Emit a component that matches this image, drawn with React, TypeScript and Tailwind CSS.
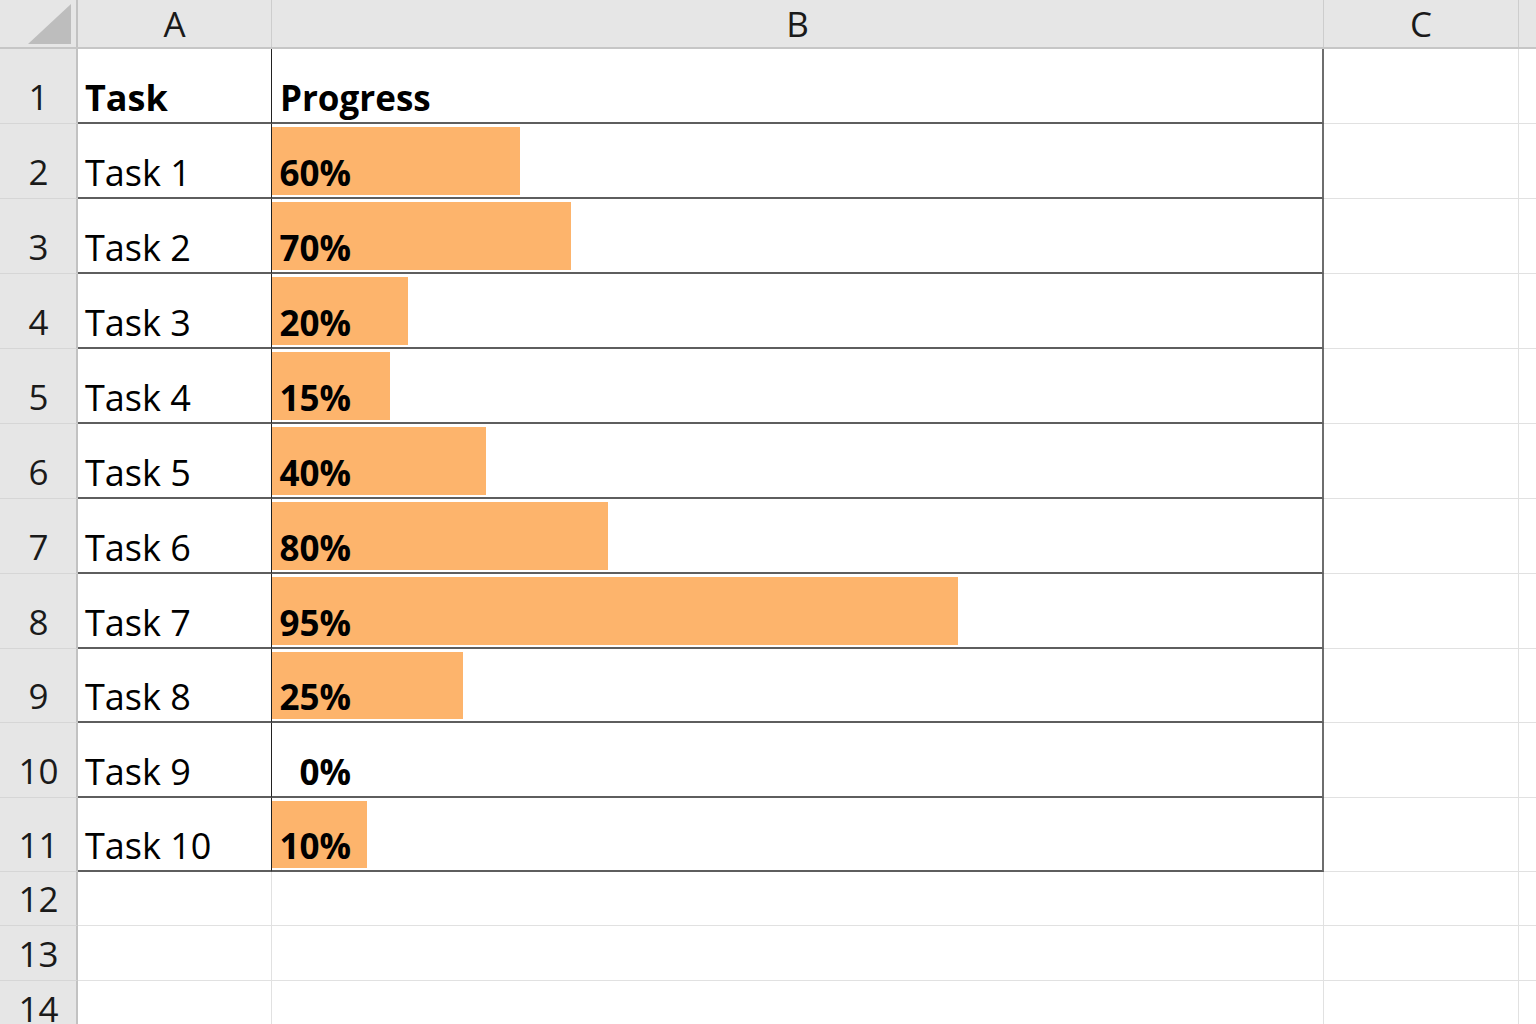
const rows = [
  { task: "Task 1", pct: "60%", bar: 248, h: 75 },
  { task: "Task 2", pct: "70%", bar: 299, h: 75 },
  { task: "Task 3", pct: "20%", bar: 136, h: 75 },
  { task: "Task 4", pct: "15%", bar: 118, h: 75 },
  { task: "Task 5", pct: "40%", bar: 214, h: 75 },
  { task: "Task 6", pct: "80%", bar: 336, h: 75 },
  { task: "Task 7", pct: "95%", bar: 686, h: 75 },
  { task: "Task 8", pct: "25%", bar: 191, h: 74 },
  { task: "Task 9", pct: "0%", bar: 0, h: 75 },
  { task: "Task 10", pct: "10%", bar: 95, h: 74 },
];

const font = { fontFamily: '"Open Sans", "Noto Sans", sans-serif' };

const RowHead = ({ n }: { n: number }) => (
  <div className="w-[78px] shrink-0 bg-[#e6e6e6] border-r-2 border-r-[#c2c2c2] border-b border-b-[#d6d6d6] flex items-end justify-center pl-[1px] pb-[6px] text-[35px] leading-[40px] text-[#1a1a1a]">
    {n}
  </div>
);

const GridTail = () => (
  <>
    <div className="w-[195px] shrink-0 border-r border-r-[#e1e1e1] border-b border-b-[#e1e1e1]" />
    <div className="flex-1 border-b border-b-[#e1e1e1]" />
  </>
);

export default function App() {
  return (
    <div className="w-[1536px] h-[1024px] overflow-hidden bg-white text-black" style={font}>
      {/* column headers */}
      <div className="flex h-[49px] bg-[#e6e6e6] border-b-2 border-b-[#c6c6c6] text-[35px] leading-[44px] text-[#1a1a1a]">
        <div className="w-[78px] shrink-0 border-r-2 border-r-[#c2c2c2] flex items-end justify-end pr-[4px] pb-[3px]">
          <svg width="44" height="40" viewBox="0 0 44 40">
            <polygon points="43,0 43,40 0,40" fill="#bdbdbd" />
          </svg>
        </div>
        <div className="w-[194px] shrink-0 border-r border-r-[#cdcdcd] flex items-end justify-center pb-[1px]">A</div>
        <div className="w-[1052px] shrink-0 border-r border-r-[#cdcdcd] flex items-end justify-center pb-[1px]">B</div>
        <div className="w-[195px] shrink-0 border-r border-r-[#cdcdcd] flex items-end justify-center pb-[1px]">C</div>
        <div className="flex-1" />
      </div>

      {/* header row */}
      <div className="flex h-[75px]">
        <RowHead n={1} />
        <div className="w-[194px] shrink-0 border-r-[1.5px] border-r-[#222] border-b-2 border-b-[#5e5e5e] flex items-end pl-[7px] pb-[4px] text-[36px] leading-[40px] font-bold">
          Task
        </div>
        <div className="w-[1052px] shrink-0 border-r-2 border-r-[#6e6e6e] border-b-2 border-b-[#5e5e5e] flex items-end pl-[8px] pb-[4px] text-[35px] leading-[40px] font-bold">
          Progress
        </div>
        <GridTail />
      </div>

      {rows.map((r, i) => (
        <div key={r.task} className="flex" style={{ height: r.h }}>
          <RowHead n={i + 2} />
          <div className="w-[194px] shrink-0 border-r-[1.5px] border-r-[#222] border-b-2 border-b-[#5e5e5e] flex items-end pl-[7px] pb-[4px] text-[36px] leading-[40px]">
            {r.task}
          </div>
          <div className="relative w-[1052px] shrink-0 border-r-2 border-r-[#6e6e6e] border-b-2 border-b-[#5e5e5e] flex items-end pl-[5px] pb-[4px]">
            {r.bar > 0 && (
              <div className="absolute left-0 top-[3px] bottom-[2px] bg-[#fdb46c]" style={{ width: r.bar }} />
            )}
            <span className="relative w-[74px] text-right text-[35px] leading-[40px] font-bold">{r.pct}</span>
          </div>
          <GridTail />
        </div>
      ))}

      {[12, 13, 14].map((n) => (
        <div key={n} className="flex" style={{ height: n === 12 ? 54 : 55 }}>
          <RowHead n={n} />
          <div className="w-[194px] shrink-0 border-r border-r-[#e1e1e1] border-b border-b-[#e1e1e1]" />
          <div className="w-[1052px] shrink-0 border-r border-r-[#e1e1e1] border-b border-b-[#e1e1e1]" />
          <GridTail />
        </div>
      ))}
    </div>
  );
}
